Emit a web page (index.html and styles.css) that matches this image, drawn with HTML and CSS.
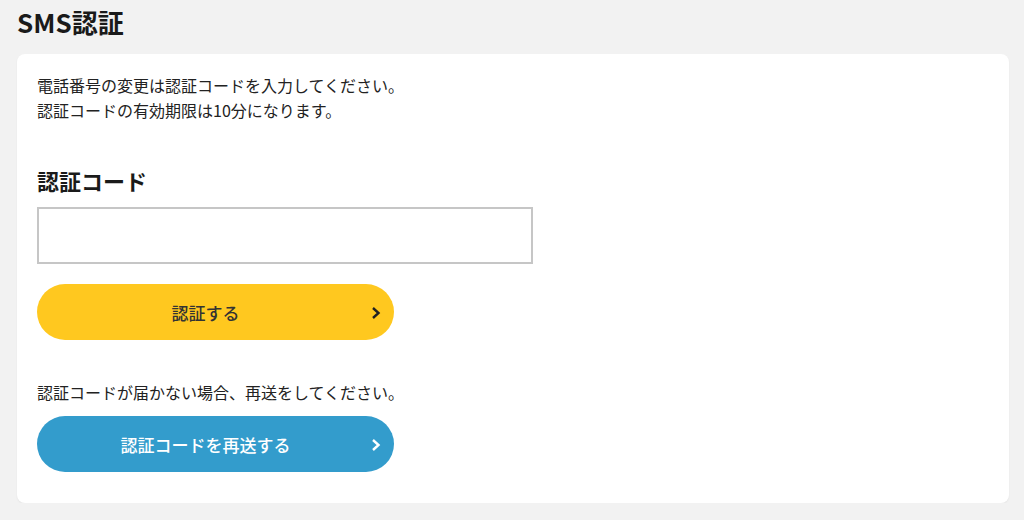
FILE: index.html
```html
<!DOCTYPE html>
<html lang="ja">
<head>
<meta charset="utf-8">
<title>SMS認証</title>
<link rel="stylesheet" href="styles.css">
</head>
<body>
<main class="page">
  <h1 class="page-title">SMS認証</h1>
  <section class="card">
    <p class="lead">電話番号の変更は認証コードを入力してください。<br>認証コードの有効期限は10分になります。</p>
    <h2 class="field-label">認証コード</h2>
    <input class="code-input" type="text" aria-label="認証コード">
    <button class="btn btn-primary" type="button">
      <span class="btn-text">認証する</span>
      <svg class="chev" viewBox="0 0 10 14" width="10" height="14"><path d="M2 2 L7.5 7 L2 12" fill="none" stroke="currentColor" stroke-width="2.4"/></svg>
    </button>
    <p class="note">認証コードが届かない場合、再送をしてください。</p>
    <button class="btn btn-secondary" type="button">
      <span class="btn-text">認証コードを再送する</span>
      <svg class="chev" viewBox="0 0 10 14" width="10" height="14"><path d="M2 2 L7.5 7 L2 12" fill="none" stroke="currentColor" stroke-width="2.4"/></svg>
    </button>
  </section>
</main>
</body>
</html>
```
FILE: styles.css
```css
* { box-sizing: border-box; }
html, body { margin: 0; padding: 0; }
body {
  background: #f2f2f2;
  font-family: "Noto Sans CJK JP", "Noto Sans", sans-serif;
  color: #222;
}
.page {
  padding: 4px 15px 0 17px;
}
.page-title {
  margin: 0;
  font-size: 26px;
  line-height: 36px;
  font-weight: 700;
  color: #1a1a1a;
  height: 50px;
}
.card {
  background: #fff;
  border-radius: 8px;
  padding: 19px 20px 31px;
  display: flex;
  flex-direction: column;
  align-items: flex-start;
  box-shadow: 0 1px 2px rgba(0,0,0,0.06);
}
.lead {
  margin: 0;
  font-size: 16px;
  line-height: 25px;
  color: #222;
}
.field-label {
  margin: 42px 0 0;
  font-size: 22px;
  line-height: 30px;
  font-weight: 700;
  color: #1a1a1a;
}
.code-input {
  margin-top: 12px;
  width: 496px;
  height: 57px;
  border: 2px solid #c6c6c6;
  border-radius: 0;
  background: #fff;
  font-size: 16px;
  padding: 0 12px;
}
.btn {
  position: relative;
  width: 357px;
  height: 56px;
  border: none;
  border-radius: 28px;
  font-family: inherit;
  font-size: 17px;
  font-weight: 500;
  display: flex;
  align-items: center;
  justify-content: center;
  padding: 0 20px 0 0;
  cursor: pointer;
}
.btn .chev {
  position: absolute;
  right: 13px;
  top: 50%;
  margin-top: -6px;
}
.btn-primary {
  margin-top: 20px;
  background: #ffc81f;
  color: #333;
}
.btn-primary .chev { color: #222; }
.btn-secondary {
  margin-top: 11px;
  background: #339ccc;
  color: #fff;
}
.note {
  margin: 40px 0 0;
  font-size: 16px;
  line-height: 25px;
  color: #222;
}
```
